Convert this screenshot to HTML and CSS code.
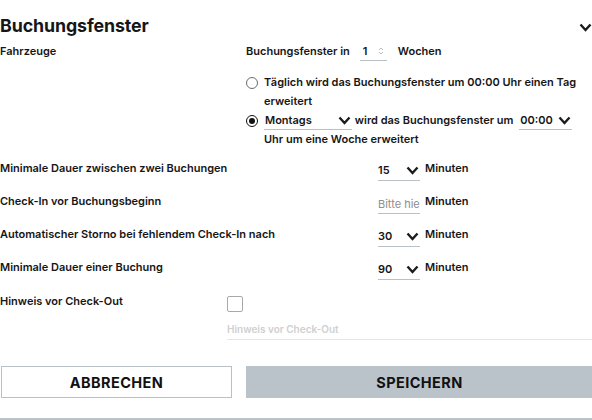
FILE: index.html
```html
<!DOCTYPE html>
<html lang="de">
<head>
    <meta charset="UTF-8">
    <meta name="viewport" content="width=device-width, initial-scale=1.0">
    <title>Buchungsfenster</title>
    <link rel="stylesheet" href="styles.css">
</head>
<body>
    <div class="panel">
        <div class="panel-head">
            <h2>Buchungsfenster</h2>
            <svg class="chev" width="13" height="9" viewBox="0 0 13 9"><path d="M1.5 1.5 L6.5 7 L11.5 1.5" fill="none" stroke="#1c1c1c" stroke-width="2.4"/></svg>
        </div>

        <div class="row-window">
            <div class="label">Fahrzeuge</div>
            <div class="window">
                <div class="weeks">
                    <span>Buchungsfenster in</span>
                    <span class="num-input">1
                        <svg class="spin" width="8" height="10" viewBox="0 0 8 10"><path d="M2 4 L4 2 L6 4 M2 6 L4 8 L6 6" fill="none" stroke="#b5b5b5" stroke-width="0.9"/></svg>
                    </span>
                    <span>Wochen</span>
                </div>
                <div class="radio">
                    <span class="dot"></span>
                    <span class="radio-text">Täglich wird das Buchungsfenster um 00:00 Uhr einen Tag erweitert</span>
                </div>
                <div class="radio">
                    <span class="dot checked"></span>
                    <span class="radio-text">
                        <span class="select sel-day">Montags
                            <svg class="chev" width="13" height="9" viewBox="0 0 13 9"><path d="M1.5 1.5 L6.5 7 L11.5 1.5" fill="none" stroke="#1c1c1c" stroke-width="2.4"/></svg>
                        </span>
                        wird das Buchungsfenster um
                        <span class="select sel-time">00:00
                            <svg class="chev" width="13" height="9" viewBox="0 0 13 9"><path d="M1.5 1.5 L6.5 7 L11.5 1.5" fill="none" stroke="#1c1c1c" stroke-width="2.4"/></svg>
                        </span>
                        Uhr um eine Woche erweitert
                    </span>
                </div>
            </div>
        </div>

        <div class="row-min">
            <div class="label">Minimale Dauer zwischen zwei Buchungen</div>
            <span class="select sel-min">15
                <svg class="chev" width="13" height="9" viewBox="0 0 13 9"><path d="M1.5 1.5 L6.5 7 L11.5 1.5" fill="none" stroke="#1c1c1c" stroke-width="2.4"/></svg>
            </span>
            <span class="unit">Minuten</span>
        </div>
        <div class="row-min">
            <div class="label">Check-In vor Buchungsbeginn</div>
            <input class="sel-min text-input" type="text" placeholder="Bitte hier eingeben">
            <span class="unit">Minuten</span>
        </div>
        <div class="row-min">
            <div class="label">Automatischer Storno bei fehlendem Check-In nach</div>
            <span class="select sel-min">30
                <svg class="chev" width="13" height="9" viewBox="0 0 13 9"><path d="M1.5 1.5 L6.5 7 L11.5 1.5" fill="none" stroke="#1c1c1c" stroke-width="2.4"/></svg>
            </span>
            <span class="unit">Minuten</span>
        </div>
        <div class="row-min">
            <div class="label">Minimale Dauer einer Buchung</div>
            <span class="select sel-min">90
                <svg class="chev" width="13" height="9" viewBox="0 0 13 9"><path d="M1.5 1.5 L6.5 7 L11.5 1.5" fill="none" stroke="#1c1c1c" stroke-width="2.4"/></svg>
            </span>
            <span class="unit">Minuten</span>
        </div>

        <div class="row-note">
            <div class="label">Hinweis vor Check-Out</div>
            <div class="note">
                <span class="checkbox"></span>
                <div class="note-text">Hinweis vor Check-Out</div>
            </div>
        </div>

        <div class="actions">
            <button class="btn btn-cancel">Abbrechen</button>
            <button class="btn btn-save">Speichern</button>
        </div>
        <div class="bottom-bar"></div>
    </div>
</body>
</html>
```

FILE: styles.css
```css
body { margin: 0; font-family: Inter, "Open Sans", sans-serif; color: #161616; background: #fff; overflow: hidden; }
.panel { width: 593px; }
.panel-head { display: flex; justify-content: space-between; align-items: center; height: 34px; padding-top: 8px; }
.panel-head h2 { margin: 0; font-size: 17.8px; font-weight: 700; letter-spacing: -0.1px; }
.panel-head .chev { margin: 4px 1px 0 0; }

.label { font-size: 11px; font-weight: 600; line-height: 19px; }

.row-window { display: grid; grid-template-columns: 246px 1fr; }
.window { font-size: 11px; font-weight: 600; line-height: 19px; }
.weeks { display: flex; align-items: center; margin-bottom: 12px; }
.num-input { display: inline-flex; align-items: center; justify-content: space-between; width: 24px; margin: 0 11px 0 10px; padding-left: 3px; border-bottom: 1px solid #b9c0c6; line-height: 17px; }
.spin { margin-right: 2px; }

.radio { display: flex; align-items: flex-start; }
.dot { flex: none; width: 10px; height: 10px; border: 1px solid #6b6b6b; border-radius: 50%; margin: 4px 6px 0 0; position: relative; }
.dot.checked { border-color: #111; }
.dot.checked::after { content: ""; position: absolute; top: 2px; left: 2px; width: 6px; height: 6px; border-radius: 50%; background: #111; }
.radio-text { flex: 1; padding-right: 6px; }

.select { display: inline-flex; align-items: center; justify-content: space-between; border-bottom: 1px solid #b9c0c6; font-weight: 600; line-height: 17px; vertical-align: bottom; }
.sel-day { width: 87px; padding-left: 1px; }
.sel-time { width: 52px; margin-left: 3px; padding-left: 1px; }
.sel-day .chev, .sel-time .chev, .sel-min .chev { margin-right: 1px; }

.row-min { display: grid; grid-template-columns: 378px 42px auto; height: 33px; align-items: start; }
.row-window + .row-min { margin-top: 10px; }
.sel-min { box-sizing: border-box; font-size: 11px; width: 42px; margin-top: 3px; padding-bottom: 1px; line-height: 17px; }
.text-input { height: 19px; padding: 0 0 1px 0; border: none; border-bottom: 1px solid #b9c0c6; font-family: Inter, sans-serif; font-size: 11px; outline: none; background: transparent; }
.text-input::placeholder { color: #8e8e8e; }
.unit { font-size: 11px; font-weight: 600; line-height: 19px; margin-left: 5px; }

.row-note { display: grid; grid-template-columns: 227px 1fr; margin-top: 1px; }
.checkbox { display: block; width: 14px; height: 14px; border: 1px solid #a9a9a9; border-radius: 2px; margin-top: 4px; }
.note-text { margin-top: 10px; padding-bottom: 3px; font-size: 10px; font-weight: 600; color: #d0d0d0; border-bottom: 1px solid #e6e6e6; line-height: 14px; }

.actions { display: grid; grid-template-columns: 231px 1fr; column-gap: 14px; margin-top: 26px; padding-left: 1px; }
.btn { height: 32px; font-family: Inter, sans-serif; font-size: 14.5px; font-weight: 700; letter-spacing: 0.4px; text-transform: uppercase; color: #111; border: none; cursor: pointer; }
.btn-cancel { background: #fff; border: 1px solid #b9c0c6; }
.btn-save { background: #bbc3ca; }
.bottom-bar { height: 3px; margin-top: 20px; background: #bbc3ca; }
```
